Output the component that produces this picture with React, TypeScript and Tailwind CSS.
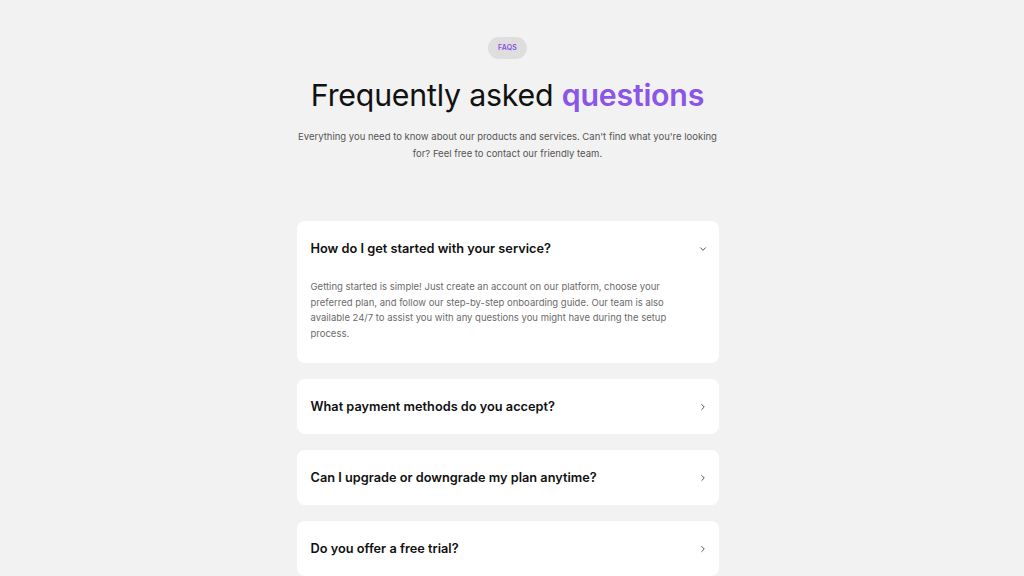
import { ChevronDown, ChevronRight } from "lucide-react"

const faqs = [
  {
    q: "How do I get started with your service?",
    a: "Getting started is simple! Just create an account on our platform, choose your preferred plan, and follow our step-by-step onboarding guide. Our team is also available 24/7 to assist you with any questions you might have during the setup process.",
    open: true,
  },
  { q: "What payment methods do you accept?" },
  { q: "Can I upgrade or downgrade my plan anytime?" },
  { q: "Do you offer a free trial?" },
]

const FaqItem: React.FC<{ q: string; a?: string; open?: boolean }> = ({ q, a, open }) => {
  return (
    <div className="bg-white rounded-lg">
      <div className="flex items-center justify-between pl-[14px] pr-[11px] py-[18px]">
        <span className="text-[12.75px] leading-[19px] font-semibold text-[#111]">{q}</span>
        {open ? (
          <ChevronDown className="size-[10px] text-[#333]" strokeWidth={2} />
        ) : (
          <ChevronRight className="size-[10px] text-[#333]" strokeWidth={2} />
        )}
      </div>
      {open && (
        <p className="pl-[14px] pr-[34px] pt-[3px] pb-[22px] text-[9.5px] leading-[15.5px] text-[#6b6b6b]">
          {a}
        </p>
      )}
    </div>
  )
}

export default function App() {
  return (
    <div className="min-h-screen bg-[#f2f2f2] font-['Inter',sans-serif] pr-[9px]">
      <section className="mx-auto w-[422px] pt-[37px] pb-10 flex flex-col items-center">
        <span className="rounded-full bg-[#dedede] px-[10px] h-[22px] flex items-center text-[7px] font-semibold text-[#8b4fe0] tracking-wide">
          FAQS
        </span>
        <h1 className="mt-[12px] text-[30.3px] leading-[48px] text-[#111] tracking-[-0.2px]">
          Frequently asked <span className="font-semibold text-[#8b55e8]">questions</span>
        </h1>
        <p className="mt-[9px] text-center text-[9.5px] leading-[17px] text-[#555] whitespace-nowrap">
          Everything you need to know about our products and services. Can't find what you're looking
          <br />
          for? Feel free to contact our friendly team.
        </p>
        <div className="mt-[59px] w-full flex flex-col gap-4">
          {faqs.map((f) => (
            <FaqItem key={f.q} q={f.q} a={f.a} open={f.open} />
          ))}
        </div>
      </section>
    </div>
  )
}
